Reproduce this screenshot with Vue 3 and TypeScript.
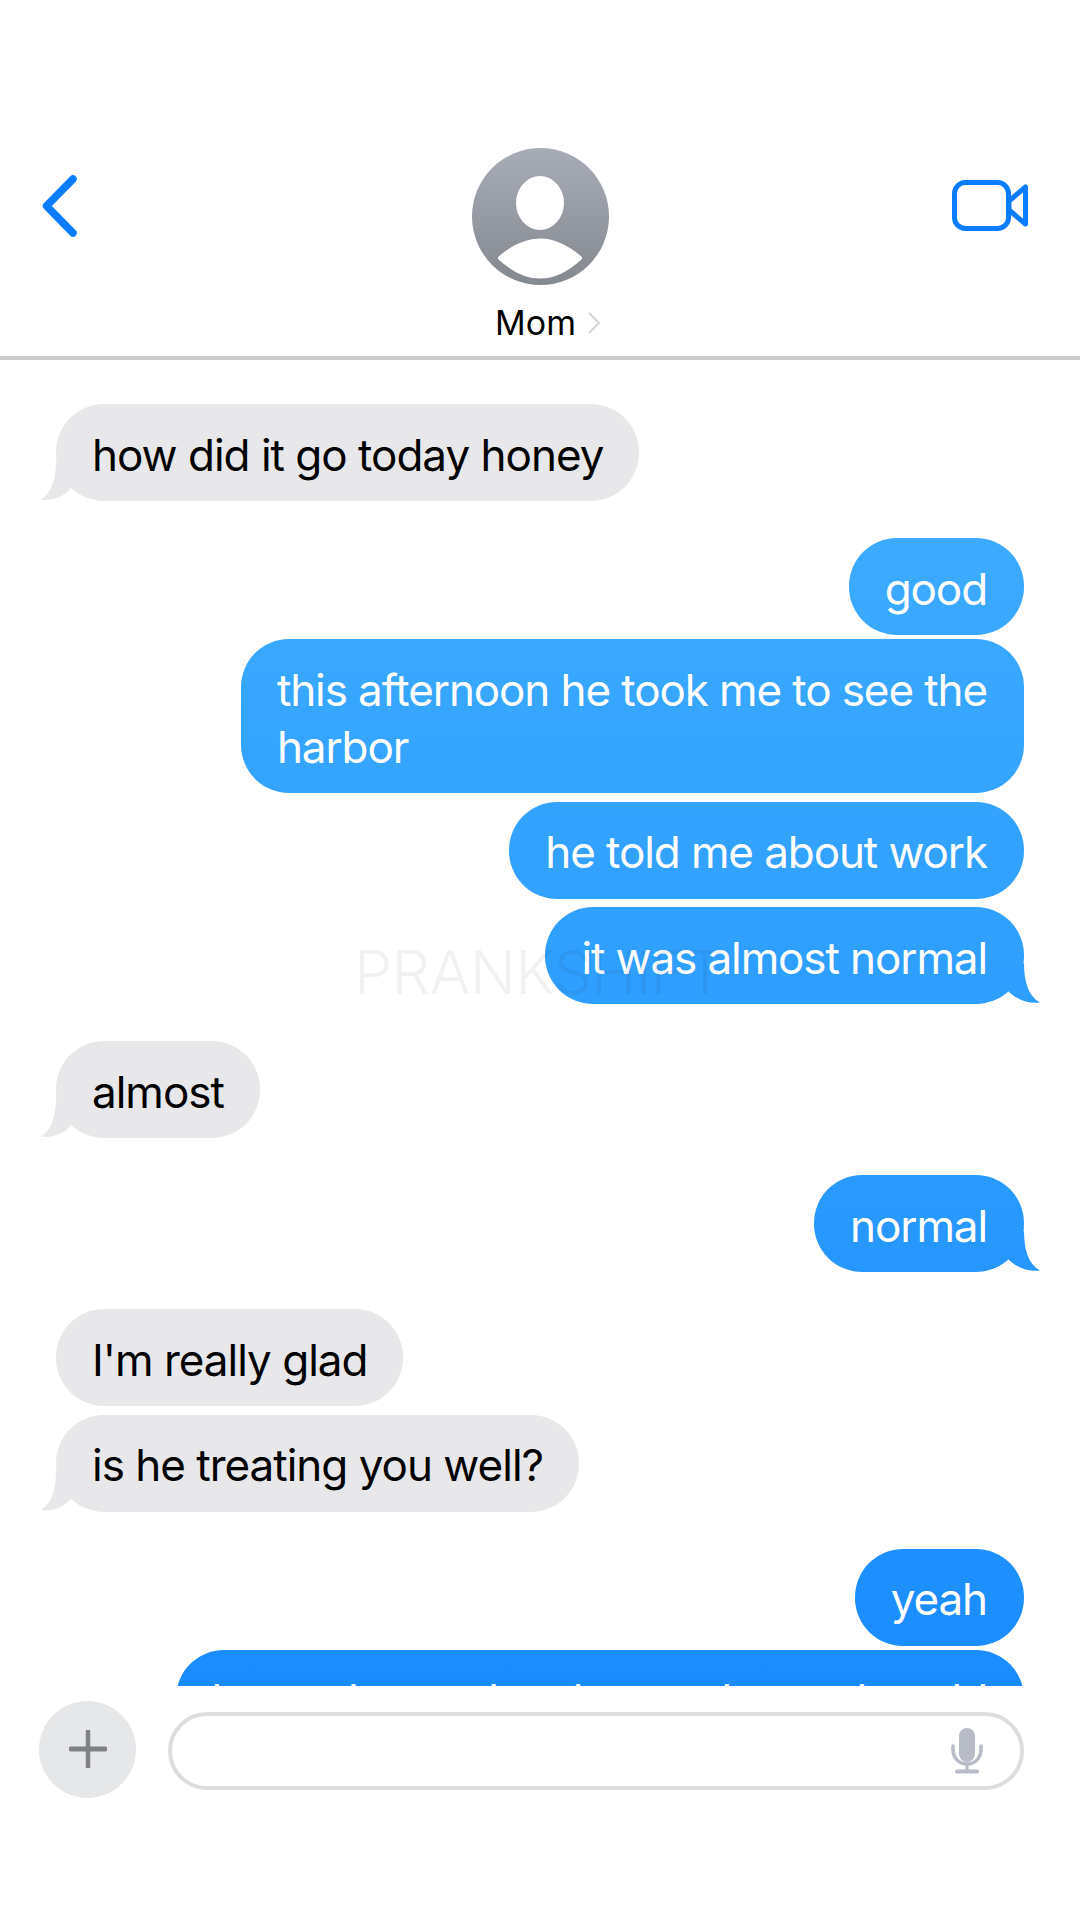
<script setup lang="ts">
type Message = {
  text: string;
  mine: boolean;
  tail?: boolean;
  gap: "s" | "m" | "l";
};

const messages: Message[] = [
  { text: "how did it go today honey", mine: false, tail: true, gap: "l" },
  { text: "good", mine: true, gap: "l" },
  { text: "this afternoon he took me to see the\nharbor", mine: true, gap: "s" },
  { text: "he told me about work", mine: true, gap: "m" },
  { text: "it was almost normal", mine: true, tail: true, gap: "m" },
  { text: "almost", mine: false, tail: true, gap: "l" },
  { text: "normal", mine: true, tail: true, gap: "l" },
  { text: "I'm really glad", mine: false, gap: "l" },
  { text: "is he treating you well?", mine: false, tail: true, gap: "m" },
  { text: "yeah", mine: true, gap: "l" },
  { text: "he got better than he used to and could", mine: true, gap: "s" },
];
</script>

<template>
  <div class="screen">
    <header class="nav">
      <svg class="back" width="38" height="64" viewBox="0 0 38 64">
        <path d="M33 5 L6.5 32 L33 59" fill="none" stroke="#0a7cff" stroke-width="7.5" stroke-linecap="round" stroke-linejoin="round" />
      </svg>
      <div class="contact">
        <svg class="avatar" width="137" height="137" viewBox="0 0 137 137">
          <defs>
            <linearGradient id="avatarFill" x1="0" y1="0" x2="0" y2="1">
              <stop offset="0" stop-color="#a7acb7" />
              <stop offset="1" stop-color="#84888f" />
            </linearGradient>
          </defs>
          <circle cx="68.5" cy="68.5" r="68.5" fill="url(#avatarFill)" />
          <ellipse cx="68" cy="55" rx="24" ry="27" fill="#fff" />
          <path d="M28 110 Q68 75 108 110 Q68 147 28 110 Z" fill="#fff" stroke="#fff" stroke-width="4" stroke-linejoin="round" />
        </svg>
        <div class="name">
          <span>Mom</span>
          <svg width="12" height="22" viewBox="0 0 12 22">
            <path d="M1 1 L11 11 L1 21" fill="none" stroke="#d6d6d6" stroke-width="2" />
          </svg>
        </div>
      </div>
      <svg class="video" width="76" height="51" viewBox="0 0 76 51">
        <rect x="2.5" y="2.5" width="54" height="46" rx="11" fill="none" stroke="#0a7cff" stroke-width="5" />
        <path d="M57 21 L73.5 7 V44 L57 30 Z" fill="none" stroke="#0a7cff" stroke-width="5" stroke-linejoin="round" />
      </svg>
    </header>

    <main class="thread">
      <div
        v-for="(msg, i) in messages"
        :key="i"
        class="row"
        :class="[msg.mine ? 'mine' : 'theirs', 'gap-' + msg.gap]"
      >
        <div class="bubble" :class="{ tail: msg.tail }">{{ msg.text }}</div>
      </div>
    </main>

    <footer class="composer">
      <div class="plus">
        <svg width="38" height="38" viewBox="0 0 38 38">
          <path d="M19 1.5 V36.5" stroke="#808184" stroke-width="4.5" stroke-linecap="round" />
          <path d="M2 19 H36" stroke="#808184" stroke-width="5" stroke-linecap="round" />
        </svg>
      </div>
      <div class="field">
        <svg width="32" height="46" viewBox="0 0 32 46">
          <rect x="8" y="0" width="16" height="34" rx="8" fill="#b8bcc6" />
          <path d="M2 18 V21 C2 30 8 36 16 36 C24 36 30 30 30 21 V18" fill="none" stroke="#b8bcc6" stroke-width="3.5" stroke-linecap="round" />
          <path d="M16 36 V43" stroke="#b8bcc6" stroke-width="3" />
          <path d="M6 43.5 H26" stroke="#b8bcc6" stroke-width="4" stroke-linecap="round" />
        </svg>
      </div>
    </footer>

    <div class="watermark">PRANKSHIFT</div>
  </div>
</template>

<style>
html,
body {
  margin: 0;
  background: #fff;
}
</style>

<style scoped>
.screen {
  position: relative;
  display: flex;
  flex-direction: column;
  width: 1080px;
  height: 1920px;
  overflow: hidden;
  background: #fff;
  font-family: Inter, "Liberation Sans", sans-serif;
}

/* Top bar */
.nav {
  display: grid;
  grid-template-columns: 1fr auto 1fr;
  align-items: start;
  height: 208px;
  padding: 148px 40px 0;
  box-sizing: content-box;
  border-bottom: 4px solid #cccccc;
}

.back {
  margin-top: 26px;
}

.video {
  justify-self: end;
  margin-top: 32px;
  margin-right: 12px;
}

.contact {
  display: flex;
  flex-direction: column;
  align-items: center;
}

.avatar {
  display: block;
}

.name {
  display: flex;
  align-items: center;
  gap: 12px;
  margin-top: 17px;
  margin-left: 15px;
  color: #000;
  font-size: 34px;
  line-height: 41px;
}

/* Messages */
.thread {
  flex: 1;
  min-height: 0;
  overflow: hidden;
  display: flex;
  flex-direction: column;
  padding: 7px 56px 0;
}

.row {
  display: flex;
  flex-shrink: 0;
}

.row.mine {
  justify-content: flex-end;
}

.gap-s {
  margin-top: 4px;
}

.gap-m {
  margin-top: 8.5px;
}

.gap-l {
  margin-top: 37px;
}

.bubble {
  position: relative;
  padding: 22.5px 36px 17.5px;
  border-radius: 48px;
  font-size: 44px;
  line-height: 57px;
  letter-spacing: -1px;
  white-space: pre;
}

.theirs .bubble {
  background: #e8e8ea;
  color: #000;
}

.mine .bubble {
  padding-right: 37px;
  background: linear-gradient(#40aeff 400px, #1a8cff 1690px) fixed;
  color: #fff;
  letter-spacing: -1.1px;
}

.bubble.tail::after {
  content: "";
  position: absolute;
  bottom: 0;
  width: 60px;
  height: 41px;
  background: inherit;
}

.theirs .bubble.tail::after {
  left: -15px;
  clip-path: path("M15 0 C15 18 11 33 0 39.5 C10 41 22 38 30 28 L40 10 Z");
}

.mine .bubble.tail::after {
  right: -16px;
  clip-path: path("M44 0 C44 18 48 33 60 39.5 C50 41 38 38 28 28 L20 10 Z");
}

/* Input row */
.composer {
  display: flex;
  align-items: center;
  gap: 32px;
  height: 234px;
  box-sizing: border-box;
  padding: 0 56px 108px 39px;
  background: #fff;
}

.plus {
  display: flex;
  flex-shrink: 0;
  align-items: center;
  justify-content: center;
  width: 97px;
  height: 97px;
  border-radius: 50%;
  background: #e6e7e9;
}

.field {
  display: flex;
  flex: 1;
  align-items: center;
  justify-content: flex-end;
  height: 78px;
  box-sizing: border-box;
  margin-top: 3px;
  padding-right: 37px;
  border: 4px solid #dddddd;
  border-radius: 39px;
}

/* Faint mark over the thread */
.watermark {
  position: absolute;
  top: 937px;
  left: 354px;
  color: rgba(0, 0, 0, 0.055);
  font-size: 61px;
  font-weight: 300;
  line-height: 70px;
  letter-spacing: -0.8px;
  white-space: nowrap;
  pointer-events: none;
}
</style>
